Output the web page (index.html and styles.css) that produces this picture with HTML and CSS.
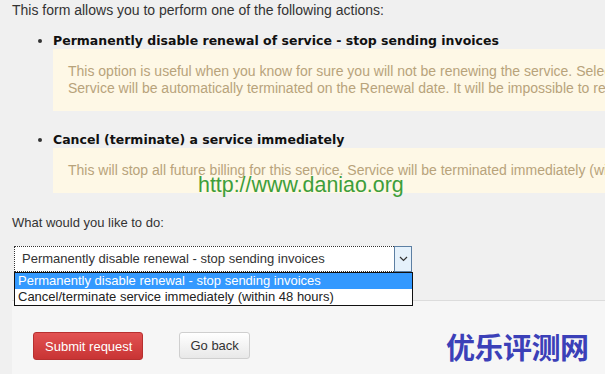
FILE: index.html
```html
<!DOCTYPE html>
<html>
<head>
<meta charset="utf-8">
<link rel="stylesheet" href="styles.css">
</head>
<body>
<div class="page">
  <p class="intro">This form allows you to perform one of the following actions:</p>
  <ul class="actions">
    <li>
      <div class="title">Permanently disable renewal of service - stop sending invoices</div>
      <div class="note">
        <span class="line">This option is useful when you know for sure you will not be renewing the service. Selecting this option will stop sending renewal invoices.</span>
        <span class="line">Service will be automatically terminated on the Renewal date. It will be impossible to revert this action.</span>
      </div>
    </li>
    <li>
      <div class="title">Cancel (terminate) a service immediately</div>
      <div class="note">
        <span class="line">This will stop all future billing for this service. Service will be terminated immediately (within 48 hours).</span>
      </div>
    </li>
  </ul>
  <p class="question">What would you like to do:</p>
  <div class="select-wrap">
    <div class="select">
      <span class="select-value">Permanently disable renewal - stop sending invoices</span>
      <span class="select-arrow">
        <svg width="9" height="6" viewBox="0 0 9 6"><path d="M1 1 L4.5 4.5 L8 1" fill="none" stroke="#333" stroke-width="1.2"/></svg>
      </span>
    </div>
    <ul class="dropdown">
      <li class="opt active">Permanently disable renewal - stop sending invoices</li>
      <li class="opt">Cancel/terminate service immediately (within 48 hours)</li>
    </ul>
  </div>
  <div class="footer">
    <button class="btn btn-red">Submit request</button>
    <button class="btn btn-light">Go back</button>
  </div>
  <div class="wm-url">http://www.daniao.org</div>
  <div class="wm-cn">优乐评测网</div>
</div>
</body>
</html>
```
FILE: styles.css
```css
html, body {
  margin: 0;
  padding: 0;
  background: #f0f0f0;
  overflow: hidden;
}
.page {
  position: relative;
  width: 605px;
  height: 374px;
  overflow: hidden;
  font-family: "Liberation Sans", Arial, sans-serif;
  font-size: 14px;
  line-height: 17px;
  color: #333;
}
.intro {
  margin: 2px 0 0 12px;
}
.actions {
  margin: 13px 0 0 0;
  padding: 0 0 0 53px;
  list-style: disc;
}
.actions li + li {
  margin-top: 20px;
}
.title {
  font-family: "DejaVu Sans", Verdana, sans-serif;
  font-weight: bold;
  font-size: 12.5px;
  color: #111;
}
.note {
  width: 800px;
  background: #fef8e6;
  color: #b8a37b;
  padding: 14px 15px 14px 15px;
  line-height: 17px;
}
.line {
  display: block;
  white-space: nowrap;
}
.question {
  margin: 21px 0 0 12px;
  font-size: 13px;
  color: #333;
}
.select-wrap {
  position: relative;
  margin: 15px 0 0 14px;
  width: 398px;
  font-size: 13px;
}
.select {
  box-sizing: border-box;
  height: 26px;
  background: #fff;
  border: 1px dotted #333;
  display: flex;
  align-items: stretch;
}
.select-value {
  flex: 1;
  padding-left: 7px;
  line-height: 24px;
  color: #333;
  white-space: nowrap;
}
.select-arrow {
  width: 16px;
  background: #e5f1fb;
  border: 1px solid #5c7fa3;
  margin: -1px -1px -1px 0;
  display: flex;
  align-items: center;
  justify-content: center;
}
.dropdown {
  position: absolute;
  left: 0;
  top: 26px;
  width: 399px;
  box-sizing: border-box;
  margin: 0;
  padding: 0;
  list-style: none;
  background: #fff;
  border: 1px solid #111;
  z-index: 2;
}
.opt {
  height: 16px;
  line-height: 16px;
  padding-left: 3px;
  color: #222;
  white-space: nowrap;
}
.opt.active {
  background: #3399ff;
  color: #fff;
}
.footer {
  margin: 28px 0 0 12px;
  border-top: 1px solid #dcdcdc;
  background: #f6f6f6;
  height: 100px;
  padding: 31px 0 0 21px;
  display: flex;
  align-items: flex-start;
  gap: 36px;
}
.btn {
  font-family: "Liberation Sans", Arial, sans-serif;
  font-size: 13px;
  height: 28px;
  border-radius: 3px;
  padding: 0 10px;
  white-space: nowrap;
  cursor: pointer;
}
.btn-red {
  color: #fff;
  padding: 0 10px 0 11px;
  background: linear-gradient(#e25252, #c83434);
  border: 1px solid #b73030;
}
.btn-light {
  height: 27px;
  color: #333;
  background: linear-gradient(#ffffff, #e8e8e8);
  border: 1px solid #cfcfcf;
}
.wm-url {
  position: absolute;
  left: 198px;
  top: 174px;
  font-family: "Liberation Sans", Arial, sans-serif;
  font-size: 21.4px;
  line-height: 22px;
  color: #3d9e3a;
  white-space: nowrap;
}
.wm-cn {
  position: absolute;
  left: 446px;
  top: 330px;
  font-family: "Noto Sans CJK SC", sans-serif;
  font-weight: bold;
  font-size: 29px;
  line-height: 32px;
  color: #3b40b8;
  letter-spacing: -0.5px;
}
```
